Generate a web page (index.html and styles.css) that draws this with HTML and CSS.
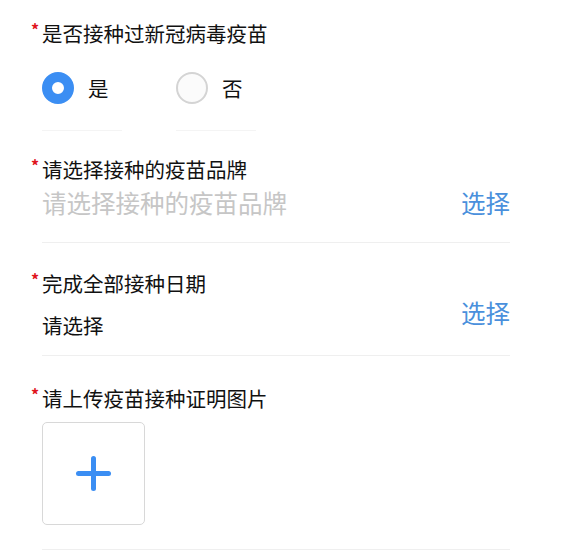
FILE: index.html
```html
<!DOCTYPE html>
<html lang="zh-CN">
<head>
    <meta charset="UTF-8">
    <meta name="viewport" content="width=device-width, initial-scale=1.0">
    <title>疫苗接种信息</title>
    <link rel="stylesheet" href="styles.css">
</head>
<body>
    <form class="form">
        <div class="field">
            <p class="label"><span class="star">*</span>是否接种过新冠病毒疫苗</p>
            <div class="radios">
                <label class="opt">
                    <span class="dot checked"></span>是
                </label>
                <label class="opt">
                    <span class="dot"></span>否
                </label>
            </div>
        </div>

        <div class="field">
            <p class="label"><span class="star">*</span>请选择接种的疫苗品牌</p>
            <div class="row line brand">
                <span class="placeholder">请选择接种的疫苗品牌</span>
                <a class="pick">选择</a>
            </div>
        </div>

        <div class="field date-field">
            <p class="label"><span class="star">*</span>完成全部接种日期</p>
            <div class="row line date">
                <span class="value">请选择</span>
                <a class="pick">选择</a>
            </div>
        </div>

        <div class="field">
            <p class="label"><span class="star">*</span>请上传疫苗接种证明图片</p>
            <div class="line upload">
                <div class="addbox">
                    <span class="plus"></span>
                </div>
            </div>
        </div>
    </form>
</body>
</html>
```

FILE: styles.css
```css
* {
    margin: 0px;
    padding: 0px;
    box-sizing: border-box;
}

body {
    background-color: #ffffff;
    font-family: "Noto Sans CJK SC", "Noto Sans", sans-serif;
    color: #111111;
}

.form {
    width: 510px;
    padding-left: 42px;
    padding-top: 19px;
}

.label {
    position: relative;
    font-size: 20.5px;
    line-height: 28px;
}

.star {
    position: absolute;
    left: -11px;
    top: -4px;
    font-size: 16px;
    font-weight: 700;
    color: #e0141e;
}

.field + .field .label {
    margin-top: 28px;
}

.field:nth-child(2) .label {
    margin-top: 24px;
}

.field.date-field .label {
    margin-top: 26px;
}

.radios {
    display: flex;
    margin-top: 25px;
}

.opt {
    display: flex;
    align-items: center;
    width: 80px;
    margin-right: 54px;
    padding-bottom: 26px;
    border-bottom: 1px solid #f4f4f4;
    font-size: 20.5px;
    line-height: 32px;
}

.dot {
    width: 32px;
    height: 32px;
    border-radius: 50%;
    border: 2px solid #d4d4d4;
    background-color: #fbfbfb;
    margin-right: 14px;
}

.dot.checked {
    border: 10px solid #3b8ef3;
    background-color: #ffffff;
}

.line {
    border-bottom: 1px solid #efefef;
}

.row {
    display: flex;
    justify-content: space-between;
    align-items: flex-start;
}

.brand {
    margin-top: 4px;
    padding-bottom: 23px;
}

.placeholder {
    font-size: 24.5px;
    line-height: 32px;
    color: #c6c6c6;
}

.pick {
    font-size: 24.5px;
    line-height: 32px;
    color: #4a90dc;
}

.date {
    padding-bottom: 16px;
}

.value {
    margin-top: 14px;
    font-size: 20.5px;
    line-height: 28px;
}

.upload {
    padding-top: 10px;
    padding-bottom: 24px;
}

.addbox {
    width: 103px;
    height: 103px;
    border: 1.5px solid #d8d8d8;
    border-radius: 5px;
    display: flex;
    justify-content: center;
    align-items: center;
}

.plus {
    position: relative;
    width: 35px;
    height: 35px;
}

.plus::before,
.plus::after {
    content: "";
    position: absolute;
    background-color: #3b8ef3;
    border-radius: 3px;
}

.plus::before {
    left: 0px;
    top: 15px;
    width: 35px;
    height: 5px;
}

.plus::after {
    left: 15px;
    top: 0px;
    width: 5px;
    height: 35px;
}
```
